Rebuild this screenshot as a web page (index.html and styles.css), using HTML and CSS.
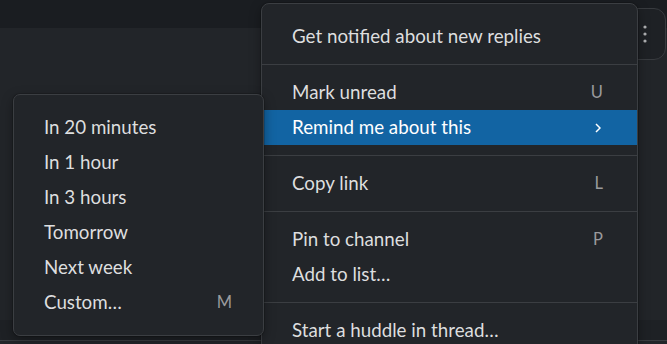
FILE: index.html
```html
<!DOCTYPE html>
<html>
<head>
<meta charset="utf-8">
<link rel="stylesheet" href="styles.css">
</head>
<body>
<div class="app">
  <div class="topbar"></div>
  <div class="content"></div>
  <div class="composer"></div>

  <div class="toolbar">
    <svg class="more" width="4" height="18" viewBox="0 0 4 18">
      <circle cx="2" cy="2" r="1.6"/>
      <circle cx="2" cy="9" r="1.6"/>
      <circle cx="2" cy="16" r="1.6"/>
    </svg>
  </div>

  <div class="menu main-menu">
    <div class="item"><span>Get notified about new replies</span></div>
    <div class="sep"></div>
    <div class="item"><span>Mark unread</span><span class="key">U</span></div>
    <div class="item active"><span>Remind me about this</span>
      <svg class="chev" width="6" height="10" viewBox="0 0 6 10"><polyline points="1,1 5,5 1,9"/></svg>
    </div>
    <div class="sep"></div>
    <div class="item"><span>Copy link</span><span class="key">L</span></div>
    <div class="sep"></div>
    <div class="item"><span>Pin to channel</span><span class="key">P</span></div>
    <div class="item"><span>Add to list…</span></div>
    <div class="sep"></div>
    <div class="item"><span>Start a huddle in thread…</span></div>
  </div>

  <div class="menu sub-menu">
    <div class="item"><span>In 20 minutes</span></div>
    <div class="item"><span>In 1 hour</span></div>
    <div class="item"><span>In 3 hours</span></div>
    <div class="item"><span>Tomorrow</span></div>
    <div class="item"><span>Next week</span></div>
    <div class="item"><span>Custom…</span><span class="key">M</span></div>
  </div>
</div>
</body>
</html>
```
FILE: styles.css
```css
* { box-sizing: border-box; }
html, body {
  margin: 0;
  padding: 0;
  width: 667px;
  height: 344px;
  overflow: hidden;
  background: #222529;
  font-family: Lato, "Noto Sans", sans-serif;
}
.app {
  position: relative;
  width: 667px;
  height: 344px;
  overflow: hidden;
  display: flex;
  flex-direction: column;
}
.topbar {
  height: 28px;
  background: #1a1d21;
  flex: none;
}
.content {
  flex: 1;
  background: #222529;
}
.composer {
  height: 24px;
  flex: none;
  background: #1e2125;
  border-bottom: 3px solid #222529;
  box-shadow: inset 0 -1px 0 #3a3d41;
}
.toolbar {
  position: absolute;
  top: 8px;
  left: 560px;
  right: 1px;
  height: 52px;
  background: #1e2125;
  border: 1px solid #383b3f;
  border-radius: 12px;
  display: flex;
  justify-content: flex-end;
  align-items: center;
  padding-right: 18px;
}
.more { fill: #b0b1b3; margin-top: -1px; }
.menu {
  position: absolute;
  background: #222529;
  border: 1px solid #3b3e42;
  border-radius: 8px;
  padding: 15px 0;
  color: #dddedf;
  font-size: 18.75px;
  box-shadow: 0 0 0 1px rgba(0,0,0,0.15), 0 4px 12px rgba(0,0,0,0.35);
}
.main-menu {
  left: 261px;
  top: 3px;
  width: 377px;
  height: 380px;
}
.sub-menu {
  left: 13px;
  top: 94px;
  width: 251px;
  height: 242px;
  border-radius: 7px;
}
.item {
  height: 35px;
  display: flex;
  align-items: center;
  justify-content: space-between;
  padding: 0 30px 2px;
  white-space: nowrap;
}
.main-menu .item { padding-right: 34px; }
.sub-menu .item { padding-right: 31px; }
.item.active {
  background: #1264a3;
  color: #ffffff;
}
.key {
  color: #9a9b9d;
  font-size: 16.5px;
}
.chev {
  fill: none;
  stroke: #ffffff;
  stroke-width: 1.5;
  margin-right: 2px;
  margin-top: 3px;
}
.sep {
  height: 1px;
  background: #3b3e42;
  margin: 10px 0;
}
```
